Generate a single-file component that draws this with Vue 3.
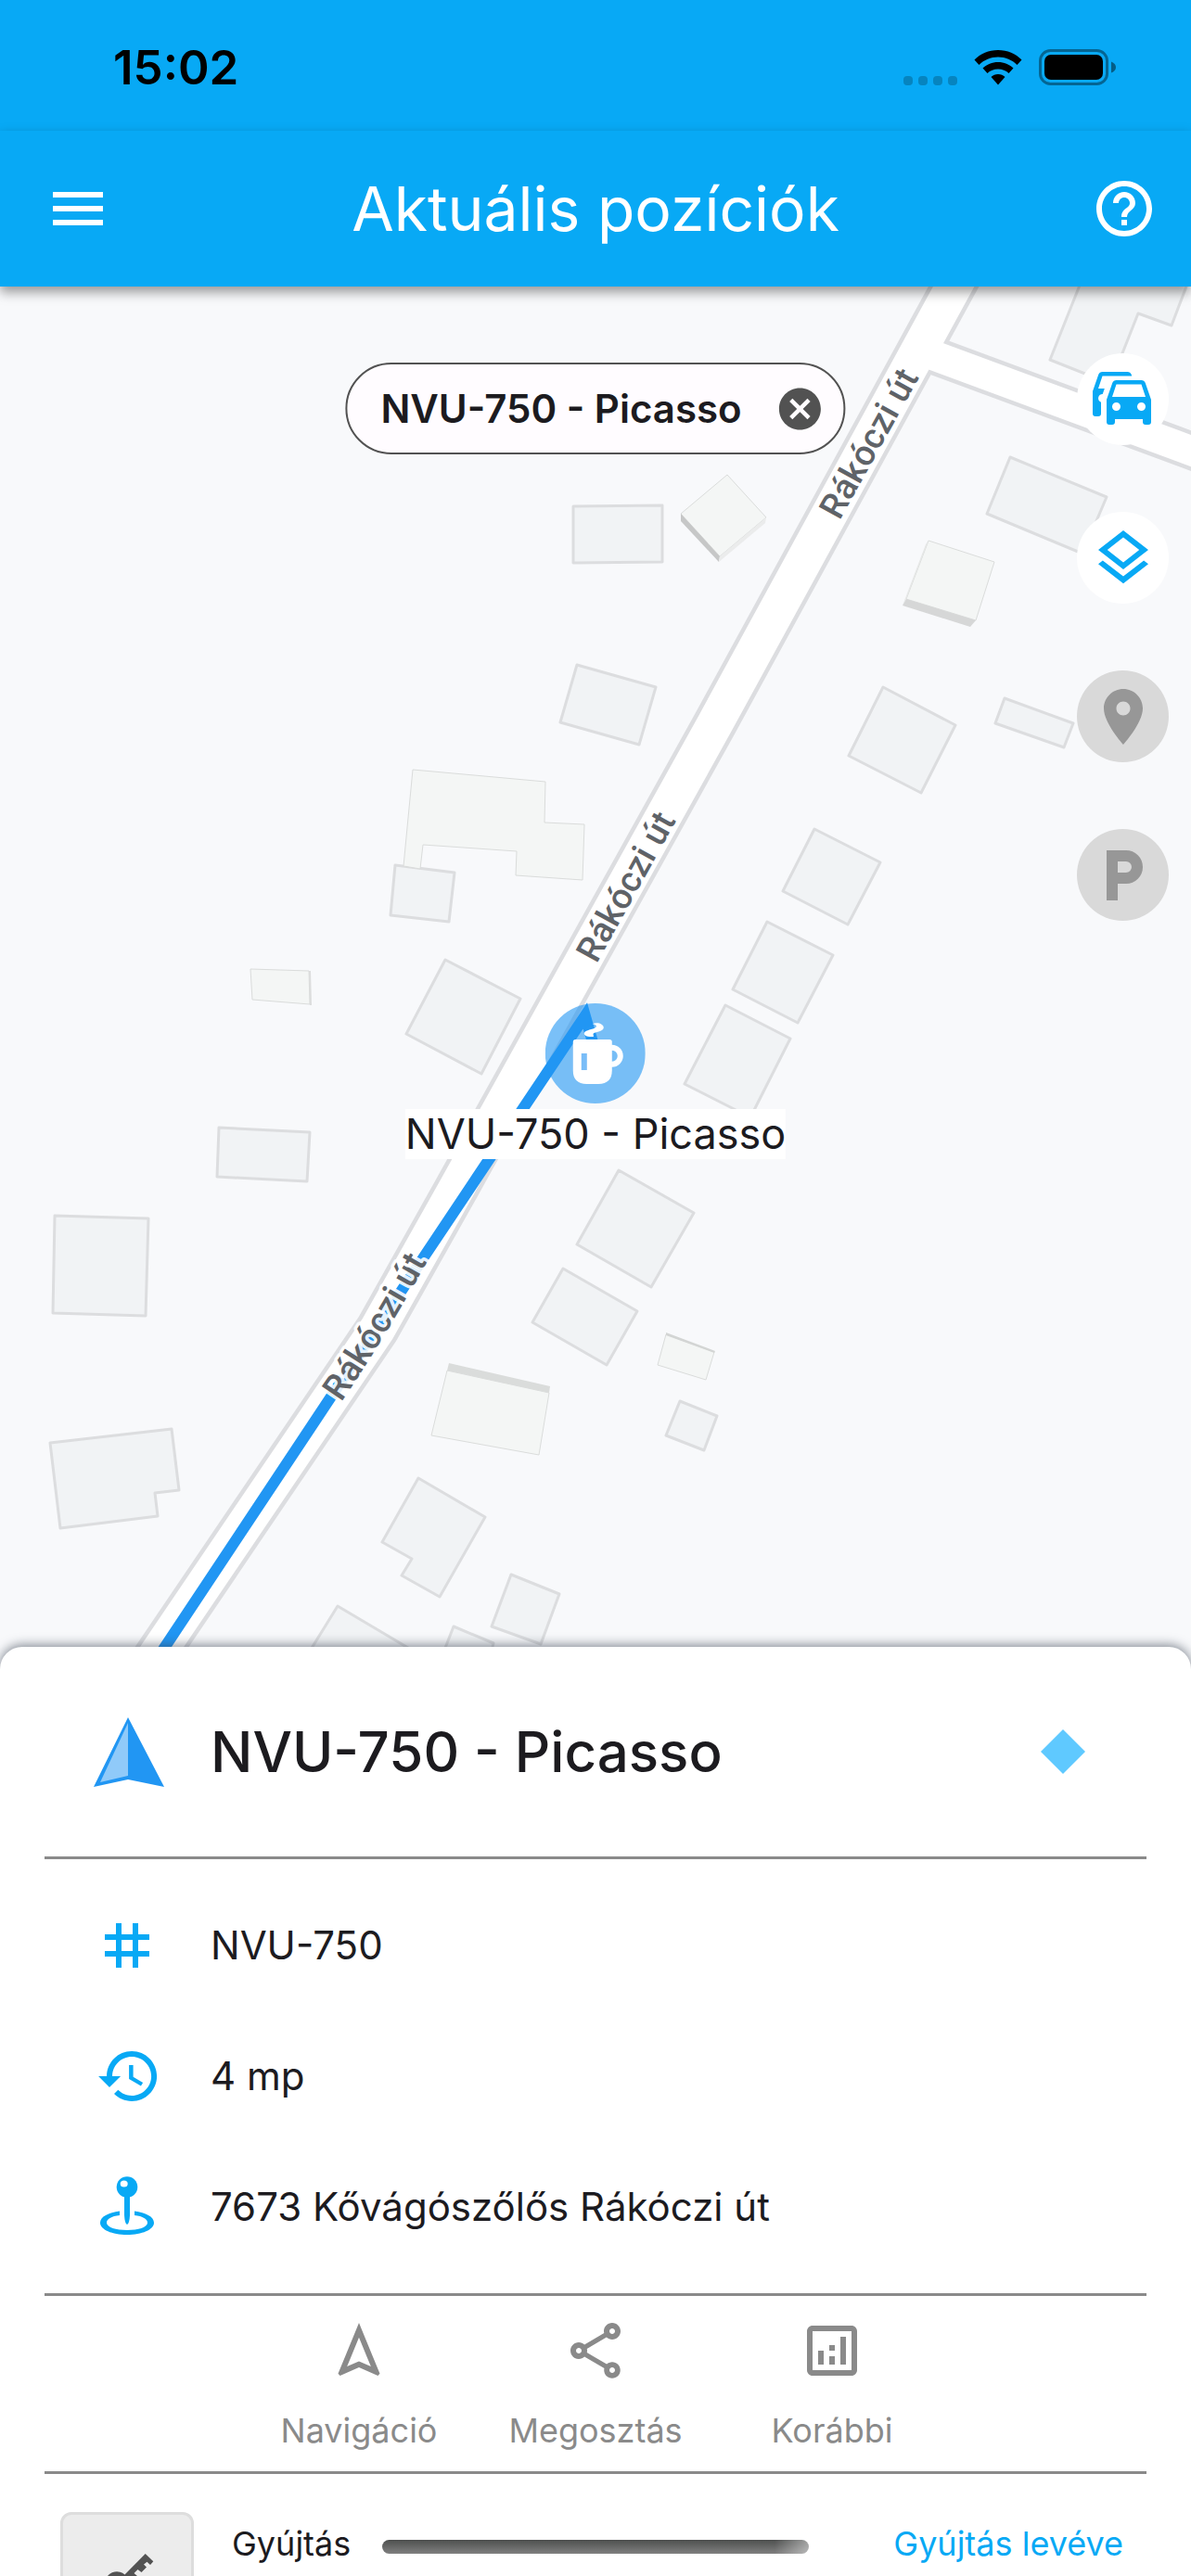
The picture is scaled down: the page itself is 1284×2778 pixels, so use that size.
<template>
  <div class="page">
    <div class="status-bar">
      <span class="time">{{ time }}</span>
      <div class="status-icons">
        <svg class="signal" viewBox="0 0 58 10" aria-hidden="true">
          <rect v-for="n in 4" :key="n" :x="(n - 1) * 16" width="10" height="10" rx="4" />
        </svg>
        <svg class="wifi" viewBox="0 0 52 38" aria-hidden="true">
          <path d="M26 0C36 0 45 4 51.500 10.500L46.500 16C41 10.500 34 7.500 26 7.500S11 10.500 5.500 16L.5 10.500C7 4 16 0 26 0Z" />
          <path d="M26 13C32.500 13 38 15.500 42.500 19.500L37.500 25C34.500 22 30.500 20.500 26 20.500S17.500 22 14.500 25L9.500 19.500C14 15.500 19.500 13 26 13Z" />
          <path d="M26 26C29 26 31.500 27 33.500 29L26 37.500L18.500 29C20.500 27 23 26 26 26Z" />
        </svg>
        <svg class="battery" viewBox="0 0 83 39" aria-hidden="true">
          <rect x="1.500" y="1.500" width="72" height="36" rx="11" fill="none" stroke="#000" stroke-opacity=".4" stroke-width="3" />
          <rect x="6" y="6" width="63" height="27" rx="7" />
          <path d="M78 13.500Q83 15.500 83 19.500T78 25.500Z" fill-opacity=".45" />
        </svg>
      </div>
    </div>

    <header class="app-bar">
      <button class="icon-button" type="button" aria-label="Menü">
        <svg class="icon" viewBox="0 0 24 24"><path d="M3 18h18v-2H3v2zm0-5h18v-2H3v2zm0-7v2h18V6H3z" /></svg>
      </button>
      <h1>Aktuális pozíciók</h1>
      <button class="icon-button" type="button" aria-label="Súgó">
        <svg class="icon" viewBox="0 0 24 24"><path d="M11 18h2v-2h-2v2zm1-16C6.480 2 2 6.480 2 12s4.480 10 10 10 10-4.480 10-10S17.520 2 12 2zm0 18c-4.410 0-8-3.590-8-8s3.590-8 8-8 8 3.590 8 8-3.590 8-8 8zm0-14c-2.210 0-4 1.790-4 4h2c0-1.100.9-2 2-2s2 .9 2 2c0 2-3 1.750-3 5h2c0-2.250 3-2.500 3-5 0-2.210-1.790-4-4-4z" /></svg>
      </button>
    </header>

    <main class="map">
      <svg class="map-canvas" viewBox="0 309 1284 1491" preserveAspectRatio="xMidYMin slice" aria-hidden="true">
        <g class="road-casing">
          <polyline points="1000,381 1300,492" stroke-width="41" />
          <polyline :points="mainRoad" stroke-width="48" />
        </g>
        <g class="road">
          <polyline points="1000,381 1300,492" stroke-width="32" />
          <polyline :points="mainRoad" stroke-width="39" />
        </g>
        <polygon v-for="(points, i) in houses" :key="'h' + i" class="house" :points="points" />
        <polygon v-for="(b, i) in blocks" :key="'b' + i" class="block" :points="b" />
        <polygon v-for="(w, i) in walls" :key="'w' + i" :points="w.points" :fill="w.fill" />
        <polyline class="route" points="138,1836 456,1357 630.800,1095.300 643,1138" />
        <path id="bend" d="M368 1512Q408 1454 458 1365L487 1313" fill="none" />
        <g class="street">
          <text transform="translate(905 562) rotate(-61)">Rákóczi út</text>
          <text transform="translate(643 1040) rotate(-61)">Rákóczi út</text>
          <text><textPath href="#bend">Rákóczi út</textPath></text>
        </g>
      </svg>

      <div class="chip">
        <span>{{ vehicle.name }}</span>
        <button type="button" aria-label="Szűrés törlése">
          <svg viewBox="0 0 24 24"><path d="M12 2C6.470 2 2 6.470 2 12s4.470 10 10 10 10-4.470 10-10S17.530 2 12 2zm5 13.590L15.590 17 12 13.410 8.410 17 7 15.590 10.590 12 7 8.410 8.410 7 12 10.590 15.590 7 17 8.410 13.410 12 17 15.590z" /></svg>
        </button>
      </div>

      <div class="tools">
        <button v-for="tool in tools" :key="tool.label" class="tool" type="button" :disabled="tool.off" :aria-label="tool.label">
          <svg class="icon" viewBox="0 0 24 24"><path :d="tool.icon" :class="{ outline: tool.outline }" /></svg>
        </button>
      </div>

      <div class="marker">
        <svg viewBox="0 0 324 324" aria-hidden="true">
          <circle cx="162" cy="162" r="162" fill="#2196f3" fill-opacity=".6" />
          <path d="M153 67C166 59 190 66 189 79C188 90 170 92 158 96C152 99 158 104 156 108C145 109 127 107 126 98C127 87 145 86 160 80C170 76 166 69 153 67Z" fill="#fff" />
          <path d="M98 117H208Q216 117 216 125V217Q216 261 172 261H134Q90 261 90 217V125Q90 117 98 117Z" fill="#fff" />
          <path d="M214 143.500H216A27 27 0 0 1 216 197.500H214" fill="none" stroke="#fff" stroke-width="18" />
          <rect x="117" y="162" width="18" height="54" fill="#79bdf8" />
        </svg>
        <span>{{ vehicle.name }}</span>
      </div>
    </main>

    <section class="sheet">
      <div class="sheet-head">
        <svg class="arrow" viewBox="0 0 76 75" aria-hidden="true">
          <path d="M37 0L76 75L37 67L0 75Z" fill="#2196f3" />
          <path d="M37 6V63L7 70Z" fill="#90caf9" />
        </svg>
        <h2>{{ vehicle.name }}</h2>
        <svg class="diamond" viewBox="0 0 48 48" aria-hidden="true"><path d="M24 0L48 24L24 48L0 24Z" /></svg>
      </div>

      <ul class="details">
        <li>
          <svg class="icon" viewBox="0 0 24 24"><path d="M20 10V8h-4V4h-2v4h-4V4H8v4H4v2h4v4H4v2h4v4h2v-4h4v4h2v-4h4v-2h-4v-4h4zm-6 4h-4v-4h4v4z" /></svg>
          <span>{{ vehicle.plate }}</span>
        </li>
        <li>
          <svg class="icon" viewBox="-.7 0 24 24"><path d="M13 3c-4.970 0-9 4.030-9 9H1l3.890 3.890.07.14L9 12H6c0-3.870 3.130-7 7-7s7 3.130 7 7-3.130 7-7 7c-1.930 0-3.680-.79-4.940-2.060l-1.420 1.420C8.270 19.990 10.510 21 13 21c4.970 0 9-4.030 9-9s-4.030-9-9-9zm-1 5v5l4.280 2.540.72-1.210-3.500-2.080V8H12z" /></svg>
          <span>{{ vehicle.age }}</span>
        </li>
        <li>
          <svg class="icon" viewBox="0 0 72 72">
            <circle cx="36" cy="14.500" r="11.300" />
            <path d="M33 22V45Q33.500 54 36 55Q38.500 54 39 45V22Z" />
            <path d="M28 40.500C16 42 7 46.500 7 53C7 60.500 20 66 36 66S65 60.500 65 53C65 46.500 56 42 44 40.500V45C53 46 58 49 58 53C58 58 48 61 36 61S14 58 14 53C14 49 19 46 28 45Z" />
            <ellipse cx="32.700" cy="11" rx="4" ry="3.600" fill="#fff" />
          </svg>
          <span>{{ vehicle.address }}</span>
        </li>
      </ul>

      <div class="actions">
        <button v-for="action in actions" :key="action.label" type="button">
          <svg class="icon" viewBox="0 0 24 24"><path :d="action.icon" /></svg>
          <span>{{ action.label }}</span>
        </button>
      </div>

      <div class="sensor">
        <div class="tile">
          <svg class="icon" viewBox="0 0 72 72">
            <path fill-rule="evenodd" d="M55.700 9L64.300 17.300L61 21L57.500 17.700L54 20.500L57 23.500L51.500 29L47.500 26L43.500 30L47 33L38 42A13 13 0 1 1 33.500 31.500ZM26 36A5 5 0 1 0 26 46A5 5 0 1 0 26 36Z" />
          </svg>
        </div>
        <span class="sensor-name">Gyújtás</span>
        <span class="sensor-value">Gyújtás levéve</span>
      </div>
    </section>

    <div class="home-indicator"></div>
  </div>
</template>

<script setup>
import { ref } from 'vue';

const time = ref('15:02');

const vehicle = ref({
  name: 'NVU-750 - Picasso',
  plate: 'NVU-750',
  age: '4 mp',
  address: '7673 Kővágószőlős Rákóczi út',
});

const tools = [
  {
    label: 'Járművek',
    icon: 'M8 11L9.500 6.500H18.500L20 11M18.500 16A1.500 1.500 0 0 1 17 14.500A1.500 1.500 0 0 1 18.500 13A1.500 1.500 0 0 1 20 14.500A1.500 1.500 0 0 1 18.500 16M9.500 16A1.500 1.500 0 0 1 8 14.500A1.500 1.500 0 0 1 9.500 13A1.500 1.500 0 0 1 11 14.500A1.500 1.500 0 0 1 9.500 16M19.920 6C19.710 5.400 19.140 5 18.500 5H9.500C8.860 5 8.290 5.400 8.080 6L6 12V20A1 1 0 0 0 7 21H8A1 1 0 0 0 9 20V19H19V20A1 1 0 0 0 20 21H21A1 1 0 0 0 22 20V12L19.920 6M14.920 3C14.710 2.400 14.140 2 13.500 2H4.500C3.860 2 3.290 2.400 3.080 3L1 9V17A1 1 0 0 0 2 18H3A1 1 0 0 0 4 17V12.910C3.220 12.630 2.820 11.770 3.100 11C3.320 10.400 3.870 10 4.500 10H4.570L5.270 8H3L4.500 3.500H15.090L14.920 3Z',
  },
  {
    label: 'Rétegek',
    icon: 'M11.990 18.540l-7.370-5.730L3 14.070l9 7 9-7-1.630-1.270-7.380 5.740zM12 16l7.360-5.730L21 9l-9-7-9 7 1.630 1.270L12 16zm0-11.470L17.740 9 12 13.470 6.260 9 12 4.530z',
  },
  {
    label: 'Helyek',
    off: true,
    icon: 'M12 2C8.130 2 5 5.130 5 9c0 5.250 7 13 7 13s7-7.750 7-13c0-3.870-3.130-7-7-7zm0 9.500c-1.380 0-2.500-1.120-2.500-2.500s1.120-2.500 2.500-2.500 2.500 1.120 2.500 2.500-1.120 2.500-2.500 2.500z',
  },
  {
    label: 'Parkolás',
    off: true,
    outline: true,
    icon: 'M8 21V5h5a4 4 0 0 1 0 8H8',
  },
];

const actions = [
  {
    label: 'Navigáció',
    icon: 'M12 7.270l4.280 10.430-3.470-1.530-.81-.36-.81.36-3.470 1.530L12 7.270M12 2L4.500 20.290l.71.71L12 18l6.790 3 .71-.71L12 2z',
  },
  {
    label: 'Megosztás',
    icon: 'M18 16.080c-.76 0-1.440.3-1.960.77L8.910 12.700c.05-.23.09-.46.09-.7s-.04-.47-.09-.7l7.050-4.110c.54.5 1.250.81 2.040.81 1.660 0 3-1.340 3-3s-1.340-3-3-3-3 1.340-3 3c0 .24.04.47.09.7L8.040 9.810C7.500 9.310 6.790 9 6 9c-1.660 0-3 1.340-3 3s1.340 3 3 3c.79 0 1.500-.31 2.040-.81l7.120 4.160c-.05.21-.08.43-.08.65 0 1.610 1.310 2.920 2.920 2.920s2.920-1.310 2.920-2.920c0-1.610-1.310-2.920-2.920-2.920zM18 4c.55 0 1 .45 1 1s-.45 1-1 1-1-.45-1-1 .45-1 1-1zM6 13c-.55 0-1-.45-1-1s.45-1 1-1 1 .45 1 1-.45 1-1 1zm12 7.020c-.55 0-1-.45-1-1s.45-1 1-1 1 .45 1 1-.45 1-1 1z',
  },
  {
    label: 'Korábbi',
    icon: 'M19 3H5c-1.100 0-2 .9-2 2v14c0 1.100.9 2 2 2h14c1.100 0 2-.9 2-2V5c0-1.100-.9-2-2-2zm0 16H5V5h14v14zM7 12h2v5H7zm8-5h2v10h-2zm-4 7h2v3h-2zm0-4h2v2h-2z',
  },
];

const mainRoad = '1044,280 771,780 493,1280 407,1433 138,1830';

// flat buildings
const houses = [
  '618,546 714,545 714,606 618,607',
  '622,717 707,741 689,803 604,779',
  '952,741 1030,782 993,855 915,815',
  '878,894 949,930 914,997 844,961',
  '827,994 898,1030 860,1103 790,1067',
  '782,1084 852,1120 809,1205 738,1169',
  '426,933 490,941 484,994 421,987',
  '480,1035 561,1077 519,1158 438,1115',
  '236,1216 334,1221 331,1274 234,1269',
  '59,1311 160,1314 157,1419 57,1416',
  '54,1556 185,1541 193,1607 167,1610 170,1635 65,1648',
  '667,1262 748,1308 702,1388 622,1342',
  '607,1368 687,1414 654,1472 574,1426',
  '733,1511 773,1527 759,1564 718,1548',
  '451,1594 523,1636 474,1722 433,1699 444,1681 412,1663',
  '551,1698 603,1719 583,1773 530,1754',
  '489,1754 532,1772 525,1800 475,1790',
  '364,1732 445,1780 420,1810 322,1800',
  '1175,280 1132,388 1195,413 1210,381 1227,338 1263,351 1290,280',
  '1089,493 1193,536 1167,597 1064,554',
  '1083,753 1157,780 1147,806 1073,780',
];

// raised buildings: roof polygons, then their visible walls
const blocks = [
  '784,512 826,558 776,600 734,554',
  '445,830 588,843 587,887 630,889 628,949 556,944 557,918 456,911 453,937 435,934',
  '270,1045 333,1047 334,1083 272,1078',
  '718,1439 770,1458 761,1488 709,1472',
  '482,1478 592,1502 581,1569 465,1548',
  '1001,583 1072,606 1052,669 977,646',
];

const walls = [
  { points: '734,554 776,600 775,606 734,562', fill: '#c6c7c7' },
  { points: '826,558 776,600 775,606 825,564', fill: '#ebecec' },
  { points: '333,1047 335,1047 336,1084 334,1084', fill: '#dcdddd' },
  { points: '718,1437 771,1457 770,1459 718,1440', fill: '#d3d5d4' },
  { points: '482,1478 484,1470 593,1495 592,1502', fill: '#dadcdb' },
  { points: '1001,583 977,646 973,653 998,587', fill: '#e6e8e7' },
  { points: '977,646 1052,669 1046,676 973,653', fill: '#d6d7d7' },
];
</script>

<style>
body {
  margin: 0;
  background: #fff;
}
</style>

<style scoped>
.page {
  position: relative;
  display: flex;
  flex-direction: column;
  min-height: 100vh;
  overflow: hidden;
  background: #fff;
  color: #1c1b1f;
  font-family: Inter, Roboto, "Liberation Sans", sans-serif;
}

h1,
h2 {
  margin: 0;
}

button {
  border: 0;
  padding: 0;
  background: none;
  color: inherit;
  font: inherit;
  cursor: pointer;
}

.icon {
  display: block;
  width: 72px;
  height: 72px;
  flex: none;
  fill: currentColor;
}

/* top bars */
.status-bar {
  display: flex;
  justify-content: space-between;
  align-items: center;
  height: 141px;
  box-sizing: border-box;
  padding: 4px 81px 0 122px;
  background: #08a9f5;
  color: #000;
}

.time {
  font-size: 51px;
  font-weight: 600;
}

.status-icons {
  display: flex;
  align-items: flex-end;
  gap: 18px;
}

.signal {
  width: 58px;
  height: 10px;
  fill-opacity: 0.22;
}

.wifi {
  width: 52px;
  height: 38px;
}

.battery {
  width: 83px;
  height: 39px;
}

.app-bar {
  position: relative;
  z-index: 2;
  display: flex;
  align-items: center;
  height: 168px;
  padding: 0 36px;
  background: #08a9f5;
  color: #fff;
  box-shadow: 0 6px 12px rgba(0, 0, 0, 0.4);
}

.icon-button {
  padding-left: 12px;
}

h1 {
  flex: 1;
  font-size: 66px;
  font-weight: 400;
  line-height: 80px;
  text-align: center;
}

/* map */
.map {
  position: relative;
  flex: 1;
  margin-bottom: -24px;
  min-height: 1100px;
  background: #f8f9fb;
}

.map-canvas {
  position: absolute;
  width: 100%;
  height: 100%;
}

.road-casing {
  fill: none;
  stroke: #dcdde0;
  stroke-linejoin: round;
}

.road {
  fill: none;
  stroke: #fff;
  stroke-linejoin: round;
}

.house {
  fill: #f1f3f5;
  stroke: #dcdddf;
  stroke-width: 3;
  stroke-linejoin: round;
}

.block {
  fill: #f4f6f5;
  stroke: #dadcdb;
  stroke-width: 1;
}

.route {
  fill: none;
  stroke: #2196f3;
  stroke-width: 12;
  stroke-miterlimit: 10;
}

.street {
  fill: #5f6368;
  stroke: #fff;
  stroke-opacity: 0.9;
  stroke-width: 7;
  stroke-linejoin: round;
  paint-order: stroke;
  font-family: Roboto, sans-serif;
  font-size: 38px;
  font-weight: 500;
}

.chip {
  position: absolute;
  top: 82px;
  left: 50%;
  transform: translateX(-50%);
  display: flex;
  align-items: center;
  gap: 36px;
  height: 99px;
  box-sizing: border-box;
  padding: 0 20px 0 36px;
  border: 2px solid #525252;
  border-radius: 50px;
  background: #fffcff;
  font-size: 42px;
  font-weight: 600;
  white-space: nowrap;
}

.chip svg {
  display: block;
  width: 54px;
  height: 54px;
  fill: #525252;
}

.tools {
  position: absolute;
  top: 72px;
  right: 24px;
  display: flex;
  flex-direction: column;
  gap: 72px;
}

.tool {
  display: flex;
  justify-content: center;
  align-items: center;
  width: 99px;
  height: 99px;
  border-radius: 50%;
  background: #fff;
  color: #08a9f5;
}

.tool:disabled {
  background: #d9d9d9;
  color: #979797;
  cursor: default;
}

.outline {
  fill: none;
  stroke: currentColor;
  stroke-width: 4;
}

.marker {
  position: absolute;
  top: 773px;
  left: 50%;
  transform: translateX(-50%);
  display: flex;
  flex-direction: column;
  align-items: center;
  gap: 6px;
}

.marker svg {
  width: 108px;
  height: 108px;
}

.marker span {
  background: #fff;
  font-size: 45px;
  line-height: 54px;
  white-space: nowrap;
}

/* bottom sheet */
.sheet {
  position: relative;
  z-index: 1;
  padding: 0 48px;
  border-radius: 24px 24px 0 0;
  background: #fff;
  box-shadow: 0 -2px 12px rgba(50, 60, 75, 0.6);
}

.sheet-head {
  display: flex;
  align-items: center;
  height: 226px;
  padding: 0 66px 0 53px;
}

.arrow {
  width: 76px;
  height: 75px;
  margin-right: 50px;
}

h2 {
  flex: 1;
  font-size: 60px;
  font-weight: 500;
  line-height: 72px;
}

.diamond {
  width: 48px;
  height: 48px;
  fill: #5fc9ff;
}

.details {
  margin: 0;
  padding: 22px 53px 23px;
  list-style: none;
  border-top: 3px solid #8a8a8a;
  border-bottom: 3px solid #8a8a8a;
}

.details li {
  display: flex;
  align-items: center;
  gap: 54px;
  height: 141px;
  font-size: 42px;
}

.details .icon {
  color: #08a9f5;
}

.actions {
  display: grid;
  grid-template-columns: repeat(3, 255px);
  justify-content: center;
  border-bottom: 3px solid #8a8a8a;
  color: #8a8a8a;
}

.actions button {
  display: flex;
  flex-direction: column;
  align-items: center;
  gap: 28px;
  padding: 23px 0 22px;
  font-size: 36px;
  line-height: 44px;
}

.sensor {
  display: flex;
  height: 110px;
  box-sizing: border-box;
  padding: 41px 25px 0 17px;
  overflow: hidden;
  font-size: 36px;
  line-height: 68px;
}

.tile {
  display: flex;
  justify-content: center;
  align-items: center;
  flex: none;
  width: 144px;
  height: 144px;
  box-sizing: border-box;
  margin-right: 41px;
  border: 3px solid #ddd;
  border-radius: 12px;
  background: #ececec;
  color: #525252;
}

.sensor-name {
  flex: 1;
}

.sensor-value {
  color: #08a9f5;
}

.home-indicator {
  position: absolute;
  bottom: 24px;
  left: 50%;
  z-index: 3;
  width: 460px;
  height: 15px;
  transform: translateX(-50%);
  border-radius: 8px;
  background: linear-gradient(90deg, transparent 92%, rgba(255, 255, 255, 0.45)), linear-gradient(#4d4f4e, #808080);
}
</style>
